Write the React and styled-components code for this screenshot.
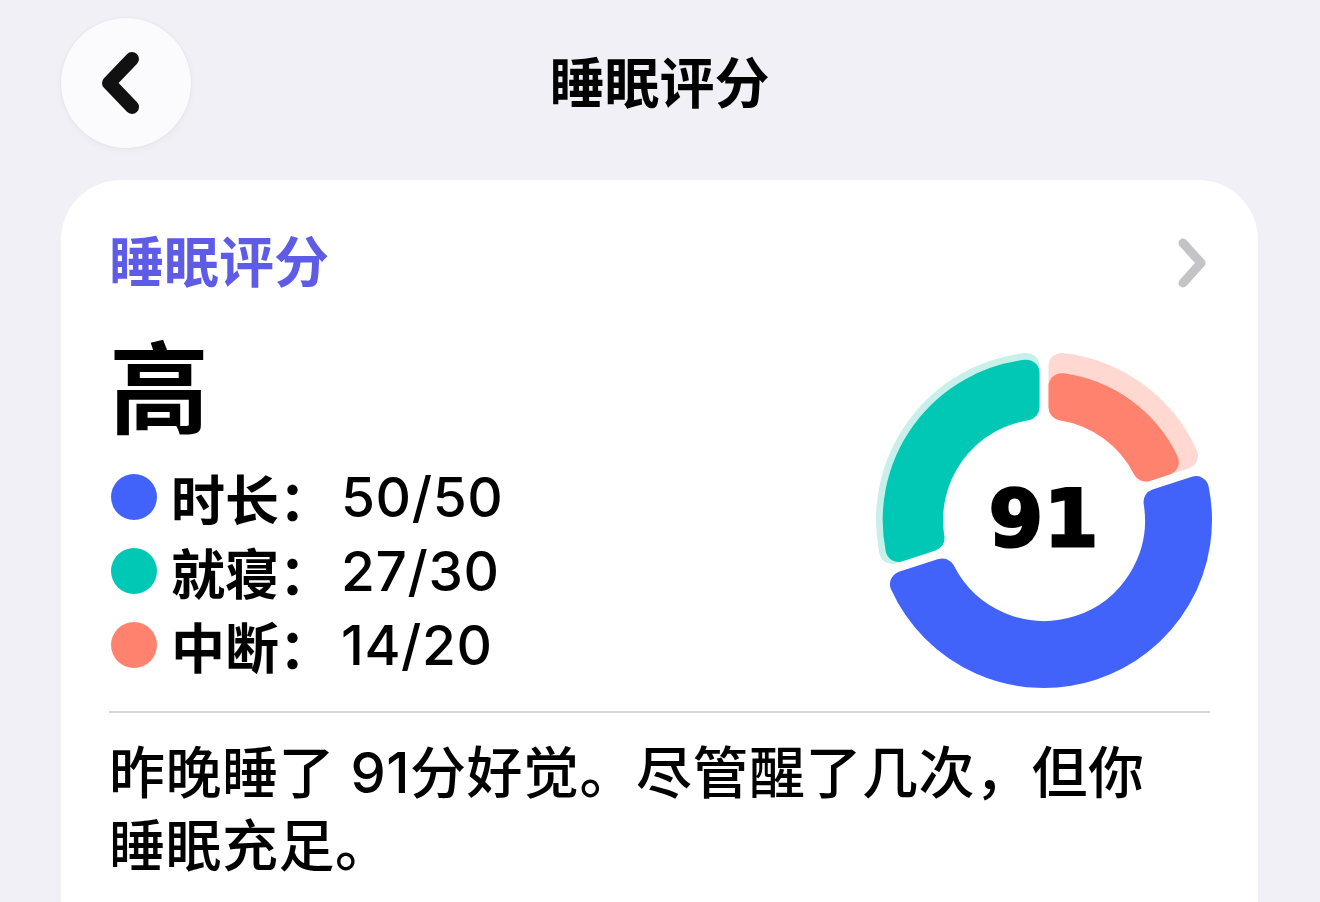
import React from 'react';
import styled, { createGlobalStyle } from 'styled-components';

const GlobalStyle = createGlobalStyle`
  html, body { margin: 0; padding: 0; background: #f0f0f6; }
  body { font-family: Inter, "Noto Sans CJK SC", sans-serif; color: #000; overflow: hidden; }
`;

const Page = styled.div`
  width: 1320px;
  height: 902px;
  overflow: hidden;
  box-sizing: border-box;
  padding: 18px 62px 0 61px;
  background: #f0f0f6;
  font-family: Inter, "Noto Sans CJK SC", sans-serif;
`;

const TopBar = styled.div`
  display: grid;
  grid-template-columns: 130px 1fr 130px;
  align-items: center;
  height: 130px;
`;

const BackButton = styled.button`
  width: 130px;
  height: 130px;
  border-radius: 50%;
  border: none;
  padding: 0;
  background: #fbfbfd;
  box-shadow: 0 0 0 1px rgba(0, 0, 0, 0.025), 0 2px 8px rgba(0, 0, 0, 0.04);
  display: flex;
  align-items: center;
  justify-content: center;
`;

const PageTitle = styled.h1`
  margin: 0;
  text-align: center;
  font-size: 55px;
  font-weight: 700;
  line-height: 1;
  letter-spacing: 0;
`;

const Card = styled.section`
  margin-top: 32px;
  background: #fff;
  border-radius: 60px;
  padding: 52px 48px 80px 48px;
`;

const CardHeader = styled.div`
  display: flex;
  justify-content: space-between;
  align-items: center;
  height: 60px;
`;

const CardTitle = styled.h2`
  margin: 0;
  font-size: 55px;
  line-height: 60px;
  font-weight: 700;
  color: #5e5ce6;
`;

const Body = styled.div`
  display: flex;
  justify-content: space-between;
  align-items: flex-end;
  margin-top: 43px;
`;

const Left = styled.div`
  display: flex;
  flex-direction: column;
`;

const Grade = styled.div`
  font-size: 100px;
  line-height: 110px;
  font-weight: 700;
`;

const Legend = styled.div`
  margin-top: 15px;
  display: flex;
  flex-direction: column;
`;

const Row = styled.div`
  display: flex;
  align-items: center;
  height: 74px;
  font-size: 54px;
`;

const Dot = styled.span`
  width: 46px;
  height: 46px;
  border-radius: 50%;
  background: ${(p) => p.$color};
  margin: 0 14px 0 2px;
  flex: none;
`;

const Label = styled.span`
  font-weight: 700;
`;

const Value = styled.span`
  font-weight: 500;
  font-size: 55px;
  letter-spacing: 0.6px;
  margin-left: 8px;
`;

const Chart = styled.div`
  position: relative;
  width: 340px;
  height: 340px;
  margin: 0 -4px -8px 0;
`;

const Score = styled.div`
  position: absolute;
  inset: 0;
  display: flex;
  align-items: center;
  justify-content: center;
  font-family: "DejaVu Sans", sans-serif;
  font-weight: 700;
  font-size: 78px;
  letter-spacing: 1px;
  -webkit-text-stroke: 3px #000;
  padding-bottom: 2px;
`;

const Divider = styled.hr`
  margin: 29px 0 0 0;
  border: none;
  height: 2px;
  background: #d6d6da;
`;

const Description = styled.p`
  margin: 24px 0 0 0;
  font-size: 56px;
  line-height: 73px;
  font-weight: 500;
  letter-spacing: 0.5px;
`;

const C = 170;
const pt = (a, r) => [C + r * Math.sin(a), C - r * Math.cos(a)];

function sector(a0deg, a1deg, rIn, rOut, gap = 4.5, c = 13) {
  const a0 = (a0deg * Math.PI) / 180;
  const a1 = (a1deg * Math.PI) / 180;
  const d = gap + c;
  const R1 = rOut - c;
  const R0 = rIn + c;
  const s1 = a0 + Math.asin(d / R1);
  const e1 = a1 - Math.asin(d / R1);
  const s0 = a0 + Math.asin(d / R0);
  const e0 = a1 - Math.asin(d / R0);
  const l1 = e1 - s1 > Math.PI ? 1 : 0;
  const l0 = e0 - s0 > Math.PI ? 1 : 0;
  const [x1, y1] = pt(s1, R1);
  const [x2, y2] = pt(e1, R1);
  const [x3, y3] = pt(e0, R0);
  const [x4, y4] = pt(s0, R0);
  const f = (n) => n.toFixed(2);
  return `M${f(x1)} ${f(y1)} A${R1} ${R1} 0 ${l1} 1 ${f(x2)} ${f(y2)} L${f(x3)} ${f(y3)} A${R0} ${R0} 0 ${l0} 0 ${f(x4)} ${f(y4)} Z`;
}

const Seg = ({ d, color }) => (
  <path d={d} fill={color} stroke={color} strokeWidth={26} strokeLinejoin="round" />
);

const BLUE = '#4263fa';
const GREEN = '#00c8b4';
const GREEN_LIGHT = '#c6f0e9';
const ORANGE = '#ff826e';
const ORANGE_LIGHT = '#ffd8d1';

const INNER = 101;
const OUTER = 168;

const rows = [
  { color: BLUE, label: '时长：', value: '50/50' },
  { color: GREEN, label: '就寝：', value: '27/30' },
  { color: ORANGE, label: '中断：', value: '14/20' },
];

export default function App() {
  const thick = OUTER - INNER;
  return (
    <Page>
      <GlobalStyle />
      <TopBar>
        <BackButton aria-label="返回">
          <svg width="130" height="130" viewBox="0 0 130 130">
            <polyline
              points="71,41 48,65 71,89"
              fill="none"
              stroke="#111"
              strokeWidth="14"
              strokeLinecap="round"
              strokeLinejoin="round"
            />
          </svg>
        </BackButton>
        <PageTitle>睡眠评分</PageTitle>
        <div />
      </TopBar>
      <Card>
        <CardHeader>
          <CardTitle>睡眠评分</CardTitle>
          <svg width="40" height="60" viewBox="0 0 40 60">
            <polyline
              points="13,11 31,31 13,51"
              fill="none"
              stroke="#c4c4c7"
              strokeWidth="9"
              strokeLinecap="round"
              strokeLinejoin="round"
            />
          </svg>
        </CardHeader>
        <Body>
          <Left>
            <Grade>高</Grade>
            <Legend>
              {rows.map((r) => (
                <Row key={r.label}>
                  <Dot $color={r.color} />
                  <Label>{r.label}</Label>
                  <Value>{r.value}</Value>
                </Row>
              ))}
            </Legend>
          </Left>
          <Chart>
            <svg width="340" height="340" viewBox="0 0 340 340">
              <Seg d={sector(0, 72, INNER, OUTER)} color={ORANGE_LIGHT} />
              <Seg d={sector(252, 360, INNER, OUTER)} color={GREEN_LIGHT} />
              <Seg d={sector(0, 72, INNER, INNER + thick * 0.7)} color={ORANGE} />
              <Seg d={sector(252, 360, INNER, INNER + thick * 0.9)} color={GREEN} />
              <Seg d={sector(72, 252, INNER, OUTER)} color={BLUE} />
            </svg>
            <Score>91</Score>
          </Chart>
        </Body>
        <Divider />
        <Description>
          昨晚睡了 91分好觉。尽管醒了几次，但你
          <br />
          睡眠充足。
        </Description>
      </Card>
    </Page>
  );
}
